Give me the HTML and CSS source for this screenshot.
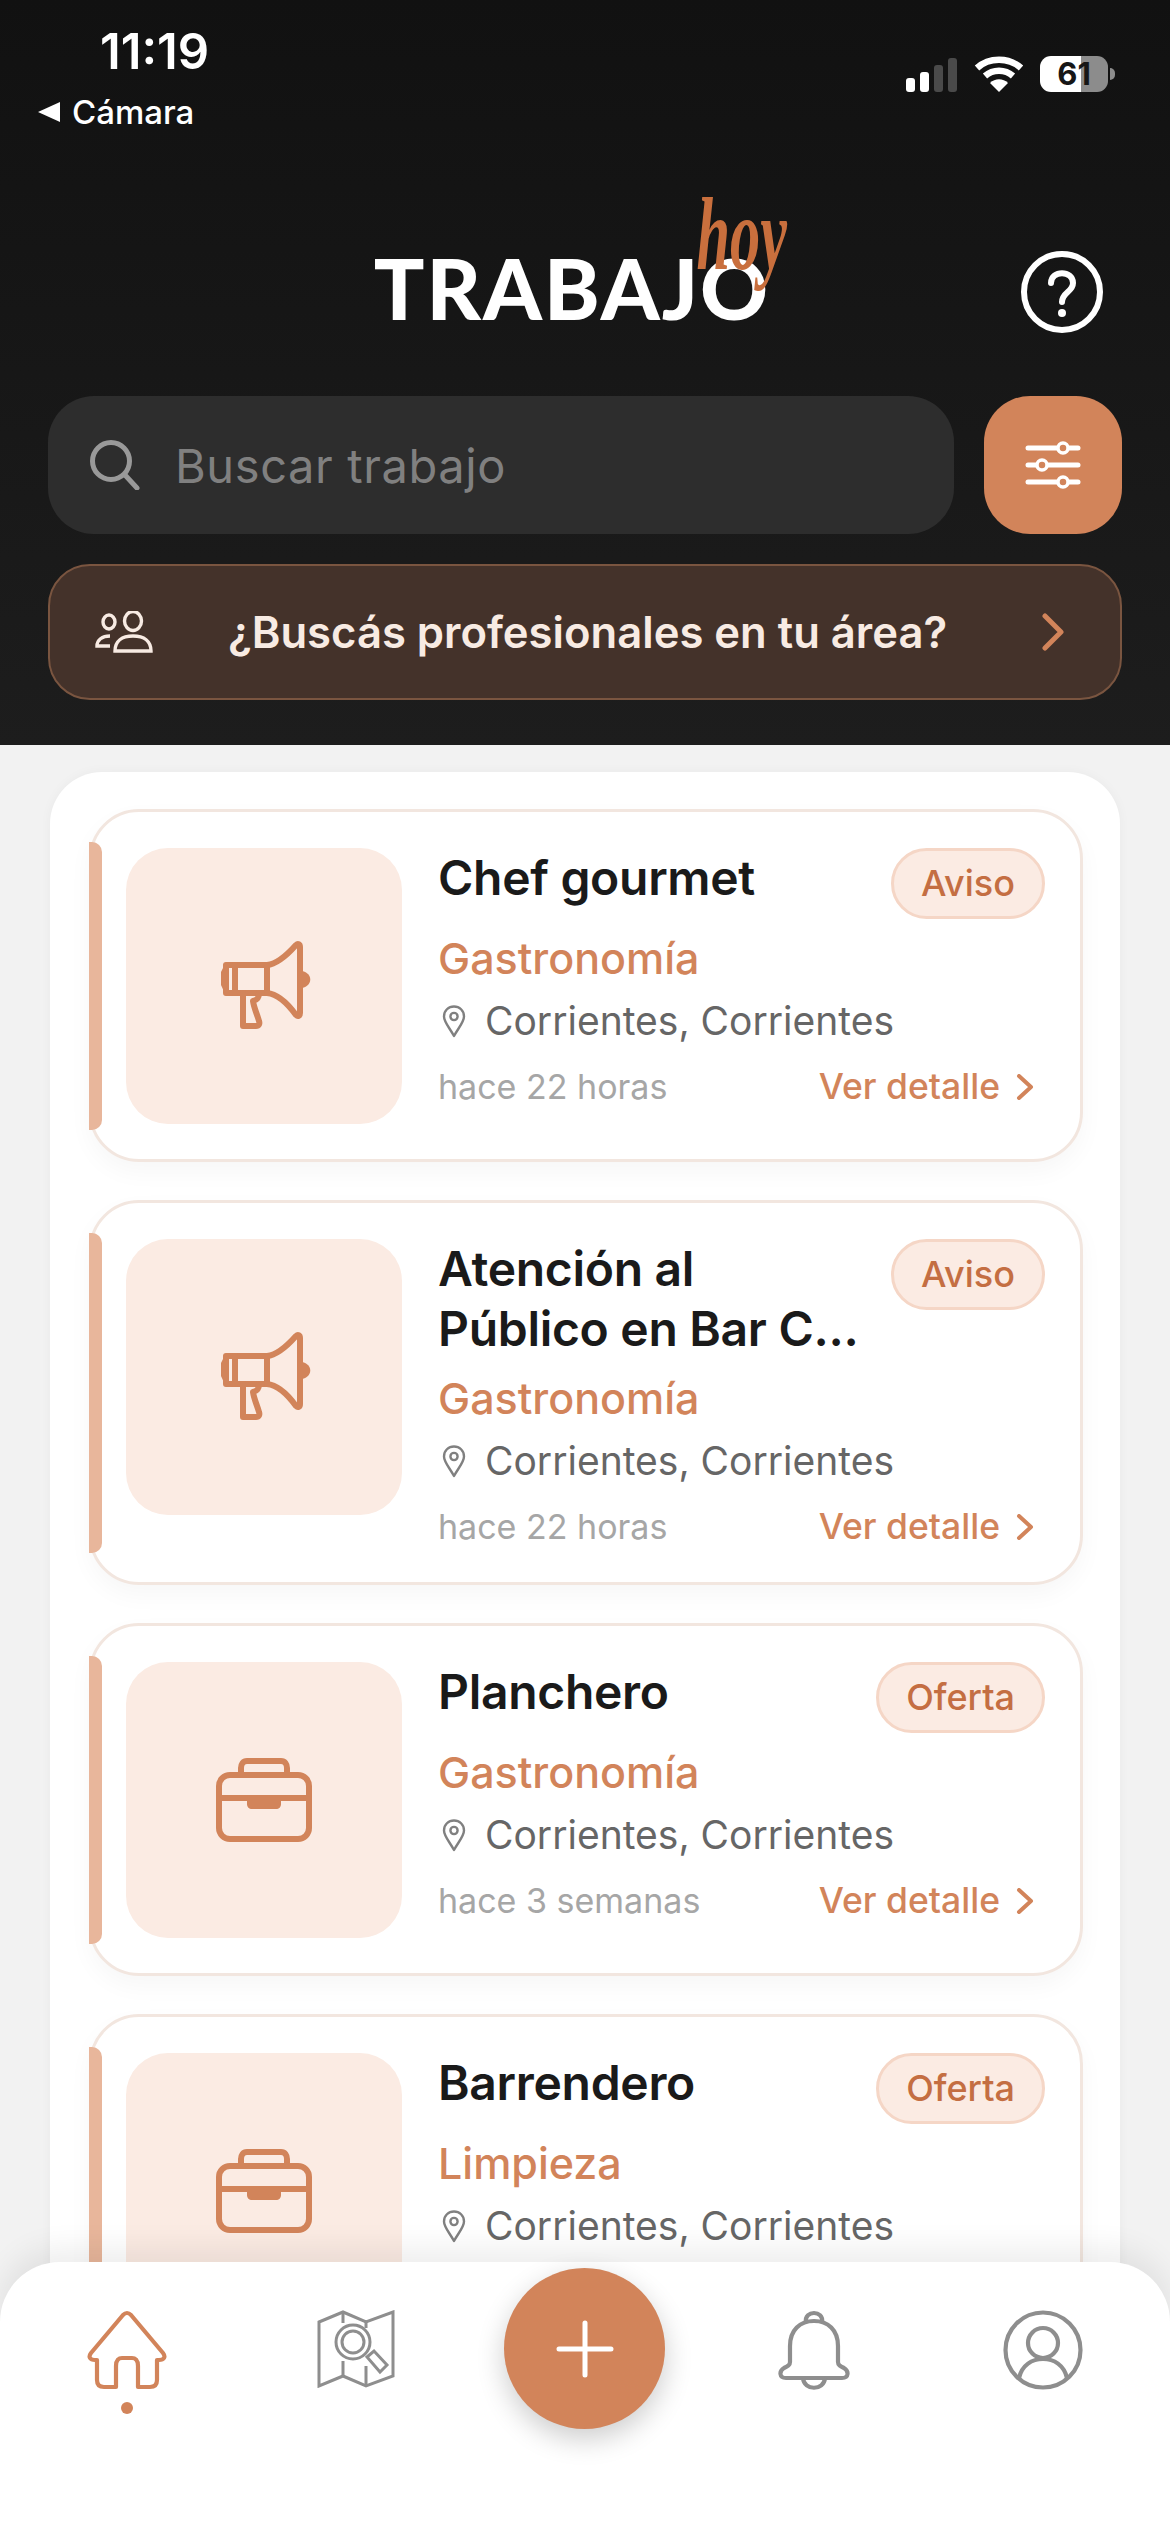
FILE: index.html
```html
<!DOCTYPE html>
<html lang="es">
<head>
<meta charset="UTF-8">
<meta name="viewport" content="width=device-width, initial-scale=1.0">
<title>Trabajo Hoy</title>
<link rel="stylesheet" href="styles.css">
</head>
<body>

<div class="app">

    <header class="top">
        <div class="statusbar">
            <div class="status-left">
                <div class="clock">11:19</div>
                <div class="back-app"><span class="back-arrow"></span>Cámara</div>
            </div>
            <div class="status-right">
                <svg class="signal" width="51" height="34" viewBox="0 0 51 34">
                    <rect x="0" y="20" width="9" height="14" rx="3" fill="#fff"/>
                    <rect x="14" y="14" width="9" height="20" rx="3" fill="#fff"/>
                    <rect x="28" y="7" width="9" height="27" rx="3" fill="#4a4a4a"/>
                    <rect x="42" y="0" width="9" height="34" rx="3" fill="#4a4a4a"/>
                </svg>
                <svg class="wifi" width="50" height="36" viewBox="0 0 50 36">
                    <path d="M3 12 C15 1 35 1 47 12" fill="none" stroke="#fff" stroke-width="6.5"/>
                    <path d="M11 20 C19 13 31 13 39 20" fill="none" stroke="#fff" stroke-width="6.5"/>
                    <path d="M16 27 C21 22 29 22 34 27 L25 36 Z" fill="#fff"/>
                </svg>
                <div class="battery">
                    <span class="battery-num">61</span>
                </div>
                <span class="battery-nub"></span>
            </div>
        </div>

        <div class="logo-row">
            <div class="logo">TRABAJO<span class="logo-hoy">hoy</span></div>
            <svg class="help" width="84" height="84" viewBox="0 0 84 84">
                <circle cx="42" cy="42" r="38" fill="none" stroke="#fff" stroke-width="6"/>
                <path d="M31 33 C31 20 53 20 53 33 C53 42 42 42 42 52" fill="none" stroke="#fff" stroke-width="6" stroke-linecap="round"/>
                <circle cx="42" cy="63" r="4" fill="#fff"/>
            </svg>
        </div>

        <div class="search-row">
            <div class="search">
                <svg width="50" height="50" viewBox="0 0 50 50">
                    <circle cx="21" cy="21" r="18.5" fill="none" stroke="#999" stroke-width="5"/>
                    <path d="M35 35 L47 48" stroke="#999" stroke-width="5" stroke-linecap="round"/>
                </svg>
                <span class="search-text">Buscar trabajo</span>
            </div>
            <div class="filter-btn">
                <svg width="56" height="48" viewBox="0 0 56 48">
                    <g stroke="#fff" stroke-width="5" stroke-linecap="round">
                        <path d="M3 7 H53"/>
                        <path d="M3 24 H53"/>
                        <path d="M3 41 H53"/>
                    </g>
                    <g fill="#d2845a" stroke="#fff" stroke-width="3.5">
                        <circle cx="38" cy="7" r="5"/>
                        <circle cx="17" cy="24" r="5"/>
                        <circle cx="38" cy="41" r="5"/>
                    </g>
                </svg>
            </div>
        </div>

        <div class="pro-banner">
            <svg width="58" height="42" viewBox="0 0 58 42">
                <g fill="none" stroke="#f8ebe3" stroke-width="3.4">
                    <ellipse cx="14" cy="11" rx="6" ry="7"/>
                    <ellipse cx="38" cy="10" rx="8.5" ry="9.5"/>
                    <path d="M15 25 C7 25 2 29 2 35 H15"/>
                    <path d="M20 40 C20 30 27 25 38 25 C49 25 56 30 56 40 Z"/>
                </g>
            </svg>
            <span class="pro-text">¿Buscás profesionales en tu área?</span>
            <svg width="24" height="38" viewBox="0 0 24 38">
                <path d="M4 3 L20 19 L4 35" fill="none" stroke="#d2845a" stroke-width="5" stroke-linecap="round" stroke-linejoin="round"/>
            </svg>
        </div>
    </header>

    <main class="content">
        <div class="panel">

            <div class="card">
                <span class="card-accent"></span>
                <div class="thumb">
                    <svg width="96" height="96" viewBox="0 0 96 96"><use href="#ico-mega"/></svg>
                </div>
                <div class="card-body">
                    <div class="card-head">
                        <div class="card-title">Chef gourmet</div>
                        <span class="badge">Aviso</span>
                    </div>
                    <div class="card-cat">Gastronomía</div>
                    <div class="card-loc">
                        <svg width="24" height="33" viewBox="0 0 24 33"><use href="#ico-pin"/></svg>
                        Corrientes, Corrientes
                    </div>
                    <div class="card-foot">
                        <span class="card-time">hace 22 horas</span>
                        <span class="card-link">Ver detalle
                            <svg width="18" height="26" viewBox="0 0 18 26"><use href="#ico-chev"/></svg>
                        </span>
                    </div>
                </div>
            </div>

            <div class="card">
                <span class="card-accent"></span>
                <div class="thumb">
                    <svg width="96" height="96" viewBox="0 0 96 96"><use href="#ico-mega"/></svg>
                </div>
                <div class="card-body">
                    <div class="card-head">
                        <div class="card-title">Atención al<br>Público en Bar C...</div>
                        <span class="badge">Aviso</span>
                    </div>
                    <div class="card-cat">Gastronomía</div>
                    <div class="card-loc">
                        <svg width="24" height="33" viewBox="0 0 24 33"><use href="#ico-pin"/></svg>
                        Corrientes, Corrientes
                    </div>
                    <div class="card-foot">
                        <span class="card-time">hace 22 horas</span>
                        <span class="card-link">Ver detalle
                            <svg width="18" height="26" viewBox="0 0 18 26"><use href="#ico-chev"/></svg>
                        </span>
                    </div>
                </div>
            </div>

            <div class="card">
                <span class="card-accent"></span>
                <div class="thumb">
                    <svg width="96" height="84" viewBox="0 0 96 84"><use href="#ico-case"/></svg>
                </div>
                <div class="card-body">
                    <div class="card-head">
                        <div class="card-title">Planchero</div>
                        <span class="badge">Oferta</span>
                    </div>
                    <div class="card-cat">Gastronomía</div>
                    <div class="card-loc">
                        <svg width="24" height="33" viewBox="0 0 24 33"><use href="#ico-pin"/></svg>
                        Corrientes, Corrientes
                    </div>
                    <div class="card-foot">
                        <span class="card-time">hace 3 semanas</span>
                        <span class="card-link">Ver detalle
                            <svg width="18" height="26" viewBox="0 0 18 26"><use href="#ico-chev"/></svg>
                        </span>
                    </div>
                </div>
            </div>

            <div class="card">
                <span class="card-accent"></span>
                <div class="thumb">
                    <svg width="96" height="84" viewBox="0 0 96 84"><use href="#ico-case"/></svg>
                </div>
                <div class="card-body">
                    <div class="card-head">
                        <div class="card-title">Barrendero</div>
                        <span class="badge">Oferta</span>
                    </div>
                    <div class="card-cat">Limpieza</div>
                    <div class="card-loc">
                        <svg width="24" height="33" viewBox="0 0 24 33"><use href="#ico-pin"/></svg>
                        Corrientes, Corrientes
                    </div>
                </div>
            </div>

        </div>
    </main>

    <nav class="tabbar">
        <div class="tab">
            <svg width="80" height="80" viewBox="0 0 80 80">
                <path d="M40 3 C38 3 37 4 36 5 L4 43 C1 47 3 50 8 50 H10 V70 C10 75 13 77 17 77 H29 V56 C29 50 32 48 35 48 H45 C48 48 51 50 51 56 V77 H63 C67 77 70 75 70 70 V50 H72 C77 50 79 47 76 43 L44 5 C43 4 42 3 40 3 Z" fill="none" stroke="#d2845a" stroke-width="4.2" stroke-linejoin="round"/>
            </svg>
            <span class="tab-dot"></span>
        </div>
        <div class="tab">
            <svg width="78" height="78" viewBox="0 0 78 78">
                <g fill="none" stroke="#8e8e8e" stroke-width="3">
                    <path d="M2 12 L26 2 L49 12 L76 2 V66 L49 76 L26 66 L2 76 Z"/>
                    <path d="M26 2 V13 M49 12 V18 M26 51 V66 M49 56 V76"/>
                    <circle cx="36" cy="32" r="17"/>
                    <circle cx="36" cy="32" r="11"/>
                    <path d="M50 47 L57 41 L70 55 L63 62 Z"/>
                </g>
            </svg>
        </div>
        <div class="tab tab-fab">
            <div class="fab">
                <svg width="58" height="58" viewBox="0 0 58 58">
                    <path d="M29 3 V55 M3 29 H55" stroke="#fff" stroke-width="5" stroke-linecap="round"/>
                </svg>
            </div>
        </div>
        <div class="tab">
            <svg width="72" height="80" viewBox="0 0 72 80">
                <g fill="none" stroke="#8e8e8e" stroke-width="4.2" stroke-linejoin="round">
                    <path d="M28 12 C26 0 46 0 44 12"/>
                    <path d="M12 52 V36 C12 20 22 11 36 11 C50 11 60 20 60 36 V52 C60 55 62 56 66 58 C71 61 71 68 64 68 H8 C1 68 1 61 6 58 C10 56 12 55 12 52 Z"/>
                    <path d="M25 68 C26 81 46 81 47 68"/>
                </g>
            </svg>
        </div>
        <div class="tab">
            <svg width="80" height="80" viewBox="0 0 80 80">
                <g fill="none" stroke="#8e8e8e" stroke-width="4.2">
                    <circle cx="40" cy="40" r="37.5"/>
                    <circle cx="40" cy="33" r="15"/>
                    <path d="M16 68 C19 55 29 49 40 49 C51 49 61 55 64 68"/>
                </g>
            </svg>
        </div>
    </nav>

</div>

<!-- shared icons -->
<svg class="icon-defs" width="0" height="0">
    <defs>
        <g id="ico-mega">
            <g fill="none" stroke="#d2845a" stroke-width="6" stroke-linejoin="round" stroke-linecap="round">
                <path d="M10 27 H51 V55 H10 Z"/>
                <path d="M51 27 C62 26 72 16 80 7 C82 5 84 6 84 9 V75 C84 78 82 79 80 77 C72 66 62 56 51 55"/>
                <path d="M19 27 V55"/>
                <path d="M27 55 V88 H40 C43 88 44 86 43 83 C41 76 38 70 37 63 C41 62 43 60 43 55"/>
            </g>
            <path d="M10 24 L5 34 V47 L10 58 Z" fill="#d2845a"/>
            <path d="M86 33 C97 35 97 48 86 50 Z" fill="#d2845a"/>
        </g>
        <g id="ico-case">
            <g fill="none" stroke="#d2845a" stroke-width="6">
                <rect x="3" y="17" width="90" height="64" rx="11"/>
                <path d="M25 17 V10 C25 6 27 3 31 3 H65 C69 3 71 6 71 10 V17"/>
                <path d="M3 40 H93"/>
            </g>
            <path d="M31 40 H65 V46 C65 49 63 51 60 51 H36 C33 51 31 49 31 46 Z" fill="#d2845a"/>
        </g>
        <g id="ico-pin">
            <path d="M12 31 C7 22 2 17 2 11.5 C2 5.5 6.5 1.5 12 1.5 C17.5 1.5 22 5.5 22 11.5 C22 17 17 22 12 31 Z" fill="none" stroke="#808080" stroke-width="2.4" stroke-linejoin="round"/>
            <circle cx="12" cy="11.5" r="3.6" fill="none" stroke="#808080" stroke-width="2.4"/>
        </g>
        <path id="ico-chev" d="M3 2 L15 13 L3 24" fill="none" stroke="#d2845a" stroke-width="4" stroke-linecap="round" stroke-linejoin="round"/>
    </defs>
</svg>

</body>
</html>
```

FILE: styles.css
```css
* {
    box-sizing: border-box;
}

body {
    margin: 0;
    padding: 0;
    background-color: #f2f2f2;
    font-family: Inter, "Noto Sans", sans-serif;
}

.app {
    position: relative;
    display: flex;
    flex-direction: column;
    width: 1170px;
    height: 2532px;
    overflow: hidden;
}

.icon-defs {
    position: absolute;
}

/* Dark top section */
.top {
    height: 745px;
    padding: 0 48px;
    background: linear-gradient(#111111, #1d1d1d);
    flex-shrink: 0;
}

.statusbar {
    display: flex;
    justify-content: space-between;
    height: 136px;
    margin: 0 -48px;
}

.status-left {
    padding: 24px 0 0 38px;
}

.clock {
    margin-left: 62px;
    color: #fff;
    font-size: 49px;
    font-weight: 600;
    line-height: 56px;
}

.back-app {
    display: flex;
    align-items: center;
    gap: 12px;
    margin-top: 12px;
    color: #fff;
    font-size: 33px;
    font-weight: 500;
    line-height: 40px;
}

.back-arrow {
    width: 0;
    height: 0;
    border-top: 10px solid transparent;
    border-bottom: 10px solid transparent;
    border-right: 22px solid #fff;
}

.status-right {
    display: flex;
    align-items: flex-end;
    height: 92px;
    padding-right: 55px;
}

.signal {
    margin-right: 17px;
}

.wifi {
    margin-right: 16px;
}

.battery {
    position: relative;
    width: 68px;
    height: 36px;
    border-radius: 11px;
    background: linear-gradient(90deg, #fff 0, #fff 61%, #8c8c8c 61%, #8c8c8c 100%);
    text-align: center;
}

.battery-num {
    color: #161616;
    font-size: 31px;
    font-weight: 700;
    line-height: 36px;
}

.battery-nub {
    width: 5px;
    height: 12px;
    margin: 0 0 12px 2px;
    border-radius: 0 6px 6px 0;
    background-color: #8c8c8c;
}

.logo-row {
    position: relative;
    display: flex;
    justify-content: center;
    height: 260px;
    padding-top: 108px;
}

.logo {
    position: relative;
    height: 72px;
    margin-left: -26px;
    color: #fff;
    font-family: Lato, Inter, sans-serif;
    font-size: 84px;
    font-weight: 900;
    letter-spacing: 2px;
    line-height: 88px;
}

.logo-hoy {
    position: absolute;
    right: -17px;
    top: -65px;
    color: #c96f3d;
    font-family: "Liberation Serif", serif;
    font-size: 104px;
    font-style: italic;
    font-weight: 700;
    letter-spacing: 0;
    line-height: 110px;
    transform: scaleX(0.58);
    transform-origin: right center;
}

.help {
    position: absolute;
    right: 18px;
    top: 114px;
}

.search-row {
    display: flex;
    gap: 30px;
    height: 138px;
}

.search {
    display: flex;
    align-items: center;
    gap: 35px;
    flex: 1;
    padding-left: 42px;
    border-radius: 46px;
    background-color: #2d2d2d;
}

.search-text {
    color: #808080;
    font-size: 47px;
    letter-spacing: 0.6px;
}

.filter-btn {
    display: flex;
    align-items: center;
    justify-content: center;
    width: 138px;
    border-radius: 46px;
    background-color: #d2845a;
}

.pro-banner {
    display: flex;
    align-items: center;
    height: 136px;
    margin-top: 30px;
    padding: 0 55px 0 45px;
    border: 2px solid #7a5540;
    border-radius: 42px;
    background-color: #44322a;
}

.pro-text {
    flex: 1;
    margin-left: 75px;
    color: #f8ebe3;
    font-size: 43.6px;
    font-weight: 600;
    white-space: nowrap;
}

/* Job list */
.content {
    flex: 1;
    padding: 27px 50px 0 50px;
    overflow: hidden;
}

.panel {
    height: 100%;
    padding: 37px 37px 0 39px;
    border-radius: 52px 52px 0 0;
    background-color: #fff;
    box-shadow: 0 0 12px rgba(0, 0, 0, 0.04);
}

.card {
    position: relative;
    display: flex;
    gap: 36px;
    margin-bottom: 38px;
    padding: 36px 35px 35px 34px;
    border: 3px solid #f2e6df;
    border-radius: 50px;
    background-color: #fff;
    box-shadow: 0 10px 24px rgba(0, 0, 0, 0.035);
}

.card-accent {
    position: absolute;
    left: -3px;
    top: 30px;
    bottom: 29px;
    width: 13px;
    border-radius: 0 10px 10px 0;
    background-color: #e8b69b;
}

.thumb {
    display: flex;
    align-items: center;
    justify-content: center;
    width: 276px;
    height: 276px;
    border-radius: 42px;
    background-color: #fbebe3;
    flex-shrink: 0;
}

.card-body {
    flex: 1;
    min-width: 0;
}

.card-head {
    display: flex;
    justify-content: space-between;
    align-items: flex-start;
}

.card-title {
    color: #1a1a1a;
    font-size: 48px;
    font-weight: 600;
    letter-spacing: -0.3px;
    line-height: 60px;
    white-space: nowrap;
}

.badge {
    height: 71px;
    padding: 0 27px;
    border: 3px solid #f5d6c6;
    border-radius: 36px;
    background-color: #fbebe3;
    color: #c46e42;
    font-size: 36px;
    font-weight: 500;
    line-height: 65px;
}

.card-cat {
    margin-top: 9px;
    color: #d2845a;
    font-size: 43px;
    font-weight: 500;
    line-height: 60px;
}

.card-loc {
    display: flex;
    align-items: center;
    gap: 19px;
    margin-top: 13px;
    padding-left: 4px;
    color: #666;
    font-size: 39px;
    line-height: 40px;
}

.card-foot {
    display: flex;
    justify-content: space-between;
    align-items: center;
    margin-top: 26px;
    padding-right: 11px;
    line-height: 40px;
}

.card-time {
    color: #a6a6a6;
    font-size: 34px;
}

.card-link {
    display: flex;
    align-items: center;
    gap: 16px;
    color: #d2845a;
    font-size: 35.5px;
    font-weight: 500;
}

/* Bottom tabs */
.tabbar {
    position: absolute;
    left: 0;
    right: 0;
    bottom: 0;
    display: grid;
    grid-template-columns: repeat(5, 1fr);
    height: 270px;
    padding: 48px 12px 0 12px;
    border-radius: 60px 60px 0 0;
    background-color: #fff;
    box-shadow: 0 -14px 30px rgba(0, 0, 0, 0.07);
}

.tab {
    display: flex;
    flex-direction: column;
    align-items: center;
}

.tab-dot {
    width: 12px;
    height: 12px;
    margin-top: 12px;
    border-radius: 50%;
    background-color: #d2845a;
}

.fab {
    display: flex;
    align-items: center;
    justify-content: center;
    width: 161px;
    height: 161px;
    margin-top: -42px;
    border-radius: 50%;
    background-color: #d2845a;
    box-shadow: 0 10px 28px rgba(0, 0, 0, 0.2);
    flex-shrink: 0;
}
```
